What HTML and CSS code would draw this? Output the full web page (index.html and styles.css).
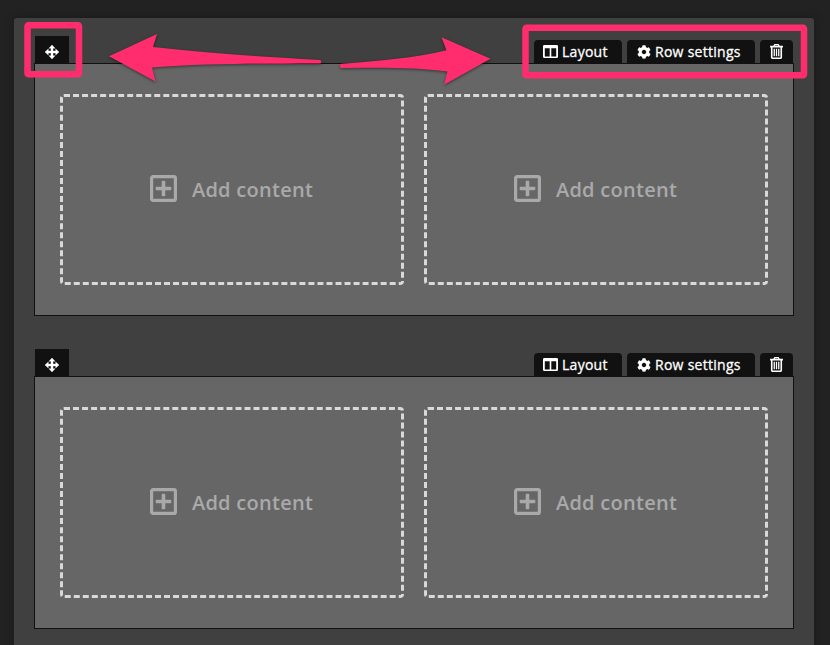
FILE: index.html
```html
<!DOCTYPE html>
<html lang="en">
<head>
<meta charset="utf-8">
<title>Layout editor</title>
<link rel="stylesheet" href="styles.css">
</head>
<body>
<svg class="symbols" aria-hidden="true">
  <symbol id="move" viewBox="0 0 14 14"><path d="M7 0 10 3.300H8V6h2.700V4L14 7l-3.300 3V8H8v2.700h2L7 14 4 10.700h2V8H3.300v2L0 7l3.300-3v2H6V3.300H4z" stroke="currentColor" stroke-width=".4"/></symbol>
  <symbol id="columns" viewBox="0 0 15 13"><path fill-rule="evenodd" d="M1.300 0h12.400Q15 0 15 1.300v10.400q0 1.300-1.300 1.300H1.300Q0 13 0 11.700V1.300Q0 0 1.300 0zM1.800 3.200v8.200h4.900V3.200zM8.300 3.200v8.200h4.900V3.200z"/></symbol>
  <symbol id="gear" viewBox="0 0 512 512"><path d="M487.400 315.700l-42.600-24.600c4.300-23.200 4.300-47 0-70.200l42.600-24.600c4.900-2.800 7.100-8.600 5.500-14-11.100-35.600-30-67.800-54.700-94.600-3.800-4.100-10-5.100-14.800-2.300L380.800 110c-17.900-15.400-38.500-27.300-60.800-35.100V25.800c0-5.600-3.900-10.500-9.400-11.700-36.700-8.200-74.300-7.800-109.200 0-5.500 1.200-9.400 6.100-9.400 11.700V75c-22.200 7.900-42.800 19.800-60.800 35.100L88.700 85.500c-4.900-2.800-11-1.900-14.800 2.300-24.700 26.700-43.600 58.900-54.700 94.600-1.700 5.400.6 11.200 5.500 14L67.300 221c-4.300 23.200-4.300 47 0 70.200l-42.600 24.600c-4.900 2.800-7.100 8.600-5.500 14 11.100 35.600 30 67.800 54.700 94.600 3.800 4.100 10 5.100 14.800 2.300l42.600-24.600c17.900 15.400 38.500 27.300 60.800 35.100v49.200c0 5.600 3.900 10.500 9.400 11.700 36.700 8.200 74.300 7.800 109.200 0 5.500-1.200 9.400-6.100 9.400-11.700v-49.200c22.200-7.900 42.800-19.800 60.800-35.100l42.600 24.600c4.900 2.800 11 1.900 14.800-2.300 24.700-26.700 43.600-58.900 54.700-94.600 1.500-5.500-.7-11.300-5.600-14.100zM256 336c-44.100 0-80-35.900-80-80s35.900-80 80-80 80 35.900 80 80-35.900 80-80 80z"/></symbol>
  <symbol id="trash" viewBox="0 0 12 14"><path fill-rule="evenodd" d="M4.100 0h3.800L9 1.700h3v1.600h-.8v9.400q0 1.300-1.300 1.300H2.100Q.8 14 .8 12.700V3.300H0V1.700h3zM4.700 1.200 4.400 1.700h3.200l-.3-.5zM2.300 3.300v9.200h7.400V3.300z"/><path d="M3.300 4.500h1.200v6.900H3.300zM5.400 4.500h1.200v6.900H5.400zM7.500 4.500h1.200v6.900H7.500z"/></symbol>
  <symbol id="plus" viewBox="0 0 27 27"><rect x="1.600" y="1.600" width="23.800" height="23.800" rx="1.500" fill="none" stroke="currentColor" stroke-width="3.200"/><path d="M11.700 6.500q0-.8.800-.8h2q.8 0 .8.800v5.200h5.200q.8 0 .8.800v2q0 .8-.8.800h-5.200v5.200q0 .8-.8.800h-2q-.8 0-.8-.8v-5.200H6.500q-.8 0-.8-.8v-2q0-.8.800-.8h5.200z"/></symbol>
</svg>

<main class="panel">
  <section class="row">
    <header class="toolbar">
      <span class="handle"><svg class="i-move"><use href="#move"/></svg></span>
      <nav class="tabs">
        <span class="tab layout"><svg class="i-columns"><use href="#columns"/></svg>Layout</span>
        <span class="tab settings"><svg class="i-gear"><use href="#gear"/></svg>Row settings</span>
        <span class="tab delete"><svg class="i-trash"><use href="#trash"/></svg></span>
      </nav>
    </header>
    <div class="columns">
      <div class="cell"><svg class="i-plus"><use href="#plus"/></svg><span>Add content</span></div>
      <div class="cell"><svg class="i-plus"><use href="#plus"/></svg><span>Add content</span></div>
    </div>
  </section>
  <section class="row">
    <header class="toolbar">
      <span class="handle"><svg class="i-move"><use href="#move"/></svg></span>
      <nav class="tabs">
        <span class="tab layout"><svg class="i-columns"><use href="#columns"/></svg>Layout</span>
        <span class="tab settings"><svg class="i-gear"><use href="#gear"/></svg>Row settings</span>
        <span class="tab delete"><svg class="i-trash"><use href="#trash"/></svg></span>
      </nav>
    </header>
    <div class="columns">
      <div class="cell"><svg class="i-plus"><use href="#plus"/></svg><span>Add content</span></div>
      <div class="cell"><svg class="i-plus"><use href="#plus"/></svg><span>Add content</span></div>
    </div>
  </section>
</main>

<svg class="annotations" viewBox="0 0 830 645" aria-hidden="true">
  <g class="frames">
    <rect x="27.500" y="25.200" width="51.500" height="49" rx="1"/>
    <rect x="525.500" y="27.700" width="278.500" height="47.500" rx="1"/>
  </g>
  <g class="arrows">
    <path d="M109 56.300 157 34l-4 13C205 53 260 56.500 320 60q1.300.2 1.300 1.800 0 1.700-1.300 1.700C260 64 205 63 152 67.500l3.500 14z"/>
    <path d="M490.500 58.700 441.500 37.300l5 13C415 58 380 61 341.500 63.800q-1.700.3-1.700 2t1.700 2.200C380 67.500 415 67 447.500 71.500l-3.500 13.300z"/>
  </g>
</svg>
</body>
</html>
```
FILE: styles.css
```css
* { box-sizing: border-box; }

body {
  margin: 0;
  height: 645px;
  overflow: hidden;
  padding: 18px 16px 0 14px;
  background: #222;
  font-family: "Open Sans", sans-serif;
}

svg { display: block; fill: currentColor; flex: none; }
.symbols { position: absolute; width: 0; height: 0; }

.panel {
  height: 640px;
  padding: 18px 20px 0;
  border-radius: 3px 3px 0 0;
  background: #404040;
  box-shadow: 0 0 8px rgba(0, 0, 0, .25);
}

.row { margin-bottom: 33px; }

.toolbar {
  display: flex;
  justify-content: space-between;
  align-items: flex-end;
  height: 27px;
  padding: 0 1px;
  color: #fff;
}

.handle {
  display: flex;
  justify-content: center;
  width: 34px;
  height: 27px;
  padding-top: 9px;
  background: #111;
}

.tabs { display: flex; gap: 5px; }

.tab {
  display: flex;
  align-items: center;
  height: 23px;
  border-radius: 4px 4px 0 0;
  background: #111;
  font-size: 14px;
  letter-spacing: .27px;
  line-height: 23px;
  white-space: nowrap;
  -webkit-text-stroke: .3px currentColor;
}

.layout { width: 88px; padding-left: 9px; gap: 4px; }
.settings { width: 128px; padding-left: 10px; gap: 4px; }
.delete { width: 33px; justify-content: center; }

.i-move { width: 14px; height: 14px; }
.i-columns { width: 15px; height: 13px; }
.i-gear { width: 14px; height: 14px; }
.i-trash { width: 13px; height: 15px; }
.i-plus { width: 27px; height: 27px; margin-top: -2px; }

.columns {
  display: grid;
  grid-template-columns: 1fr 1fr;
  gap: 20px;
  height: 253px;
  padding: 30px 25px;
  border: 1px solid #111;
  background: #666;
}

.cell {
  display: flex;
  align-items: center;
  justify-content: center;
  gap: 15px;
  padding-right: 1px;
  border: 3px dashed #d9d9d9;
  border-radius: 4px;
  color: #a9a9a9;
  font-size: 20px;
  font-weight: 600;
  letter-spacing: .27px;
  line-height: 27px;
}

.annotations { position: absolute; left: 0; top: 0; width: 830px; height: 645px; }
.frames { fill: none; stroke: #ff2d6e; stroke-width: 6.5; }
.arrows { fill: #ff2d6e; filter: drop-shadow(0 1px 1.500px rgba(0, 0, 0, .5)); }
```
